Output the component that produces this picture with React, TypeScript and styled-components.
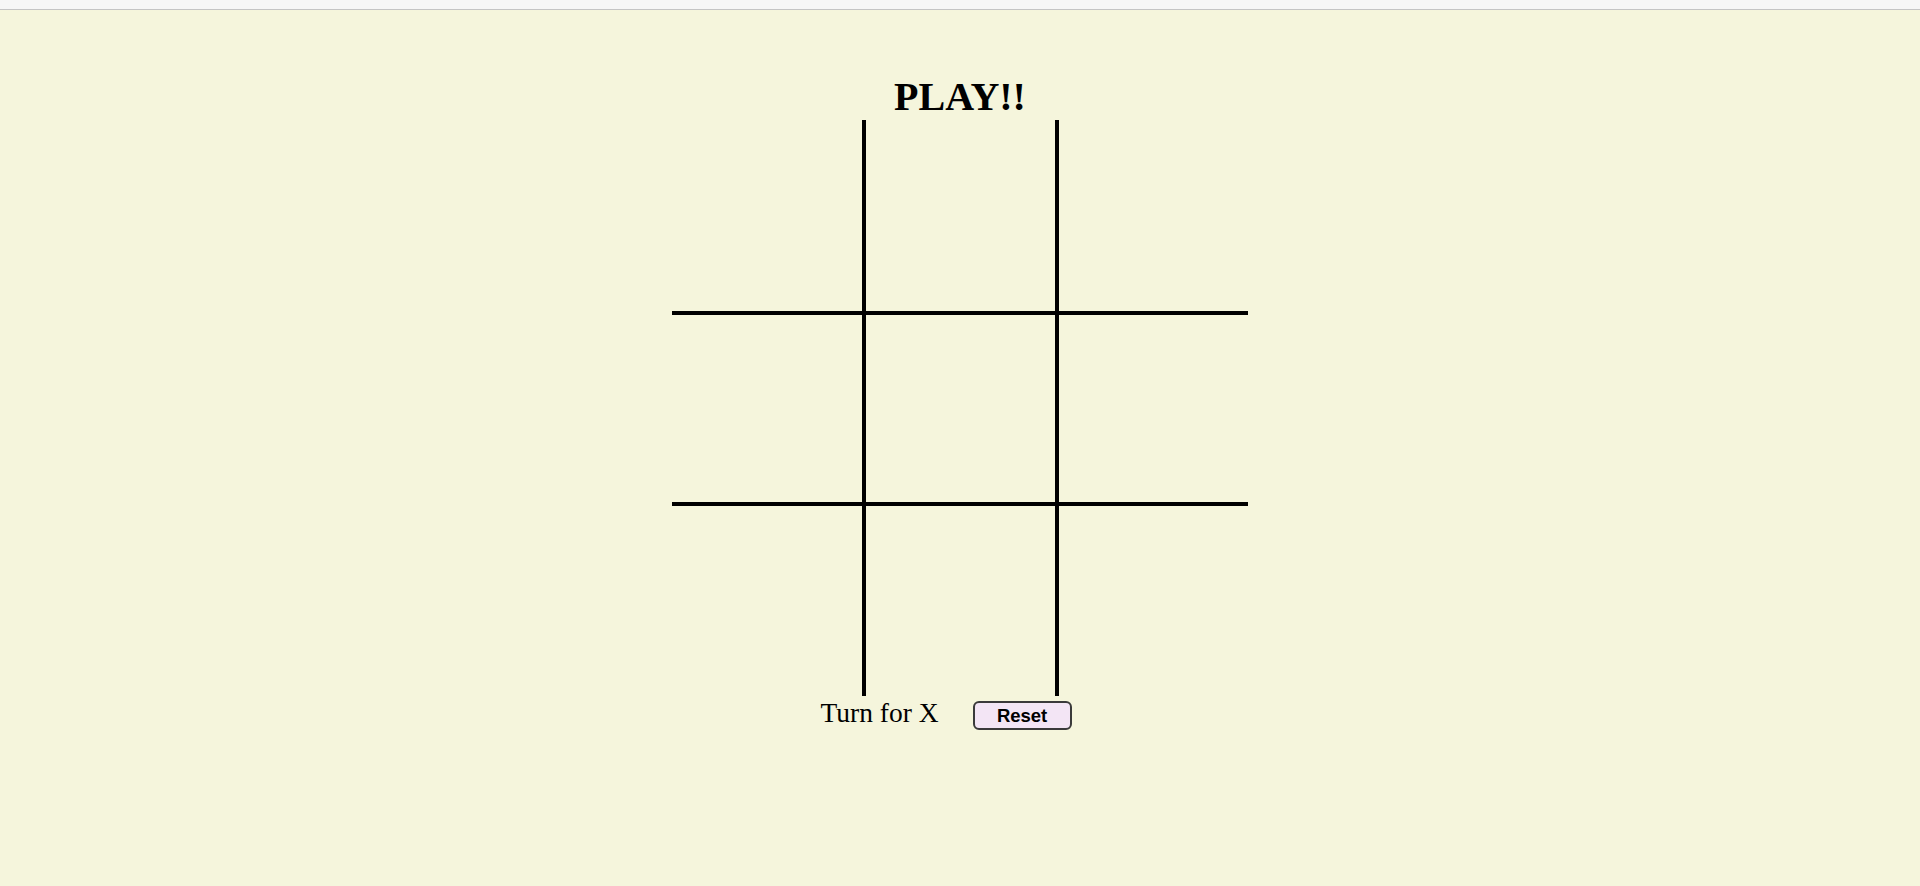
import React, { useState } from "react";
import styled, { createGlobalStyle } from "styled-components";

const GlobalStyle = createGlobalStyle`
  html, body {
    margin: 0;
    padding: 0;
    background: #f5f5dc;
    font-family: "Liberation Serif", "Times New Roman", serif;
    color: #000;
  }
  #root {
    min-height: 886px;
  }
`;

const TopBar = styled.div`
  height: 9px;
  background: #f6f6f6;
  border-bottom: 1px solid #c4c4c4;
`;

const Main = styled.main`
  display: flex;
  flex-direction: column;
  align-items: center;
  padding-top: 64px;
`;

const Title = styled.h1`
  margin: 0;
  font-family: "Liberation Serif", "Times New Roman", serif;
  font-weight: 700;
  font-size: 40px;
  line-height: 46px;
  height: 46px;
`;

const Board = styled.div`
  display: grid;
  grid-template-columns: 192px 193px 191px;
  grid-template-rows: 193px 191px 192px;
  width: 576px;
  height: 576px;
`;

const Cell = styled.button<{ $row: number; $col: number }>`
  box-sizing: border-box;
  margin: 0;
  padding: 0;
  background: transparent;
  border: 0 solid #000;
  border-top-width: ${(p) => (p.$row > 0 ? "2px" : "0")};
  border-bottom-width: ${(p) => (p.$row < 2 ? "2px" : "0")};
  border-left-width: ${(p) => (p.$col > 0 ? "2px" : "0")};
  border-right-width: ${(p) => (p.$col < 2 ? "2px" : "0")};
  border-radius: 0;
  font-family: "Liberation Serif", "Times New Roman", serif;
  font-size: 120px;
  color: #000;
  cursor: pointer;
`;

const StatusRow = styled.div`
  display: flex;
  align-items: flex-start;
  justify-content: center;
  padding-right: 28px;
`;

const TurnText = styled.div`
  font-size: 27.5px;
  line-height: 33px;
  margin-right: 34px;
  white-space: nowrap;
`;

const ResetButton = styled.button`
  box-sizing: border-box;
  margin-top: 5px;
  width: 99px;
  height: 29px;
  padding: 0;
  background: #f3e5f5;
  border: 2px solid #3a3a3a;
  border-radius: 6px;
  font-family: "Liberation Sans", Arial, sans-serif;
  font-weight: 700;
  font-size: 18.5px;
  line-height: 25px;
  color: #000;
  cursor: pointer;
`;

export default function App() {
  const [cells, setCells] = useState<string[]>(Array(9).fill(""));
  const [turn, setTurn] = useState<"X" | "O">("X");

  const play = (i: number) => {
    if (cells[i]) return;
    const next = cells.slice();
    next[i] = turn;
    setCells(next);
    setTurn(turn === "X" ? "O" : "X");
  };

  const reset = () => {
    setCells(Array(9).fill(""));
    setTurn("X");
  };

  return (
    <>
      <GlobalStyle />
      <TopBar />
      <Main>
        <Title>PLAY!!</Title>
        <Board>
          {cells.map((c, i) => (
            <Cell
              key={i}
              $row={Math.floor(i / 3)}
              $col={i % 3}
              onClick={() => play(i)}
            >
              {c}
            </Cell>
          ))}
        </Board>
        <StatusRow>
          <TurnText>Turn for {turn}</TurnText>
          <ResetButton onClick={reset}>Reset</ResetButton>
        </StatusRow>
      </Main>
    </>
  );
}
